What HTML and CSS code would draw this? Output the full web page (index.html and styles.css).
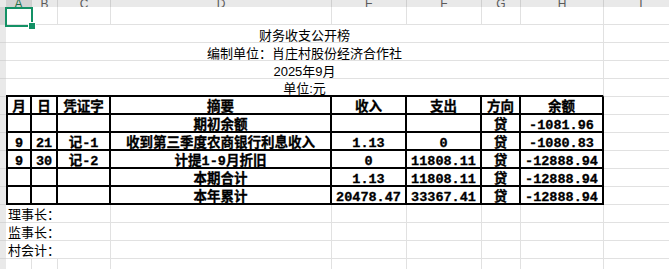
FILE: index.html
```html
<!DOCTYPE html>
<html lang="zh-CN">
<head>
<meta charset="utf-8">
<title>财务收支公开榜</title>
<link rel="stylesheet" href="styles.css">
</head>
<body>
<div class="sheet">
  <div class="row colhead">
    <div class="corner"></div>
    <div class="ch sel">A</div><div class="ch">B</div><div class="ch">C</div><div class="ch">D</div><div class="ch">E</div><div class="ch">F</div><div class="ch">G</div><div class="ch">H</div><div class="ch">I</div>
  </div>
  <div class="row">
    <div class="rh sel"></div>
    <div class="c"></div><div class="c"></div><div class="c"></div><div class="c"></div><div class="c"></div><div class="c"></div><div class="c"></div><div class="c"></div><div class="c"></div>
  </div>
  <div class="row">
    <div class="rh"></div><div class="c merge">财务收支公开榜</div><div class="c"></div>
  </div>
  <div class="row">
    <div class="rh"></div><div class="c merge">编制单位：肖庄村股份经济合作社</div><div class="c"></div>
  </div>
  <div class="row">
    <div class="rh"></div><div class="c merge">2025年9月</div><div class="c"></div>
  </div>
  <div class="row">
    <div class="rh"></div><div class="c merge ttop">单位:元</div><div class="c"></div>
  </div>
  <div class="row">
    <div class="rh"></div>
    <div class="t first">月</div><div class="t">日</div><div class="t">凭证字</div><div class="t">摘要</div><div class="t">收入</div><div class="t">支出</div><div class="t">方向</div><div class="t">余额</div><div class="c"></div>
  </div>
  <div class="row">
    <div class="rh"></div>
    <div class="t first"></div><div class="t"></div><div class="t"></div><div class="t">期初余额</div><div class="t"></div><div class="t"></div><div class="t">贷</div><div class="t">-1081.96</div><div class="c"></div>
  </div>
  <div class="row">
    <div class="rh"></div>
    <div class="t first">9</div><div class="t">21</div><div class="t">记-1</div><div class="t">收到第三季度农商银行利息收入</div><div class="t">1.13</div><div class="t">0</div><div class="t">贷</div><div class="t">-1080.83</div><div class="c"></div>
  </div>
  <div class="row">
    <div class="rh"></div>
    <div class="t first">9</div><div class="t">30</div><div class="t">记-2</div><div class="t">计提1-9月折旧</div><div class="t">0</div><div class="t">11808.11</div><div class="t">贷</div><div class="t">-12888.94</div><div class="c"></div>
  </div>
  <div class="row">
    <div class="rh"></div>
    <div class="t first"></div><div class="t"></div><div class="t"></div><div class="t">本期合计</div><div class="t">1.13</div><div class="t">11808.11</div><div class="t">贷</div><div class="t">-12888.94</div><div class="c"></div>
  </div>
  <div class="row">
    <div class="rh"></div>
    <div class="t first"></div><div class="t"></div><div class="t"></div><div class="t">本年累计</div><div class="t">20478.47</div><div class="t">33367.41</div><div class="t">贷</div><div class="t">-12888.94</div><div class="c"></div>
  </div>
  <div class="row">
    <div class="rh"></div><div class="c span3">理事长：</div><div class="c"></div><div class="c"></div><div class="c"></div><div class="c"></div><div class="c"></div><div class="c"></div>
  </div>
  <div class="row">
    <div class="rh"></div><div class="c span3">监事长：</div><div class="c"></div><div class="c"></div><div class="c"></div><div class="c"></div><div class="c"></div><div class="c"></div>
  </div>
  <div class="row">
    <div class="rh"></div><div class="c span3">村会计：</div><div class="c"></div><div class="c"></div><div class="c"></div><div class="c"></div><div class="c"></div><div class="c"></div>
  </div>
  <div class="row">
    <div class="rh"></div>
    <div class="c"></div><div class="c"></div><div class="c"></div><div class="c"></div><div class="c"></div><div class="c"></div><div class="c"></div><div class="c"></div><div class="c"></div>
  </div>
  <div class="selection"><div class="handle"></div></div>
</div>
</body>
</html>
```

FILE: styles.css
```css
html, body {
  margin: 0;
  padding: 0;
  background: #ffffff;
  overflow: hidden;
}

.sheet {
  position: relative;
  width: 679px;
  display: flex;
  flex-direction: column;
  font-family: "Liberation Sans", "Noto Sans CJK SC", sans-serif;
  font-size: 13px;
  color: #000;
}

.row {
  display: grid;
  grid-template-columns: 6px 26px 26px 53px 221px 75px 75px 39px 83px 75px;
  height: 18px;
}

.row > div {
  box-sizing: border-box;
  min-width: 0;
}

.colhead {
  height: 7px;
  overflow: hidden;
  background: #e9e9e9;
}

.corner {
  background: #e9e9e9;
}

.ch {
  display: flex;
  justify-content: center;
  align-items: flex-end;
  padding-bottom: 3px;
  line-height: 9px;
  font-size: 12px;
  color: #5a5a5a;
  border-right: 1px solid #cfcfcf;
  border-bottom: 1px solid #cfcfcf;
}

.ch.sel {
  background: #d3d3d3;
  color: #1e6e48;
}

.rh {
  background: #e9e9e9;
  border-bottom: 1px solid #d6d6d6;
}

.rh.sel {
  background: #d3d3d3;
}

.c {
  border-right: 1px solid #e1e1e1;
  border-bottom: 1px solid #e1e1e1;
  display: flex;
  align-items: flex-end;
  justify-content: center;
  line-height: 12px;
  white-space: nowrap;
}

.merge {
  grid-column: span 8;
}

.ttop {
  border-bottom: 2px solid #000;
}

.span3 {
  grid-column: span 3;
  justify-content: flex-start;
  padding-left: 2px;
  padding-bottom: 1px;
}

.t {
  border-right: 2px solid #000;
  border-bottom: 2px solid #000;
  display: flex;
  align-items: flex-end;
  justify-content: center;
  white-space: nowrap;
  font-family: "Liberation Mono", "Noto Sans CJK SC", monospace;
  font-weight: bold;
  font-size: 13.5px;
  line-height: 11px;
  -webkit-text-stroke: 0.3px #000;
}

.t.first {
  border-left: 2px solid #000;
}

.selection {
  position: absolute;
  left: 5px;
  top: 7px;
  width: 28px;
  height: 20px;
  box-sizing: border-box;
  border: 2px solid #139165;
}

.handle {
  position: absolute;
  right: -5px;
  bottom: -5px;
  width: 6px;
  height: 6px;
  background: #139165;
  border: 1px solid #ffffff;
}
```
